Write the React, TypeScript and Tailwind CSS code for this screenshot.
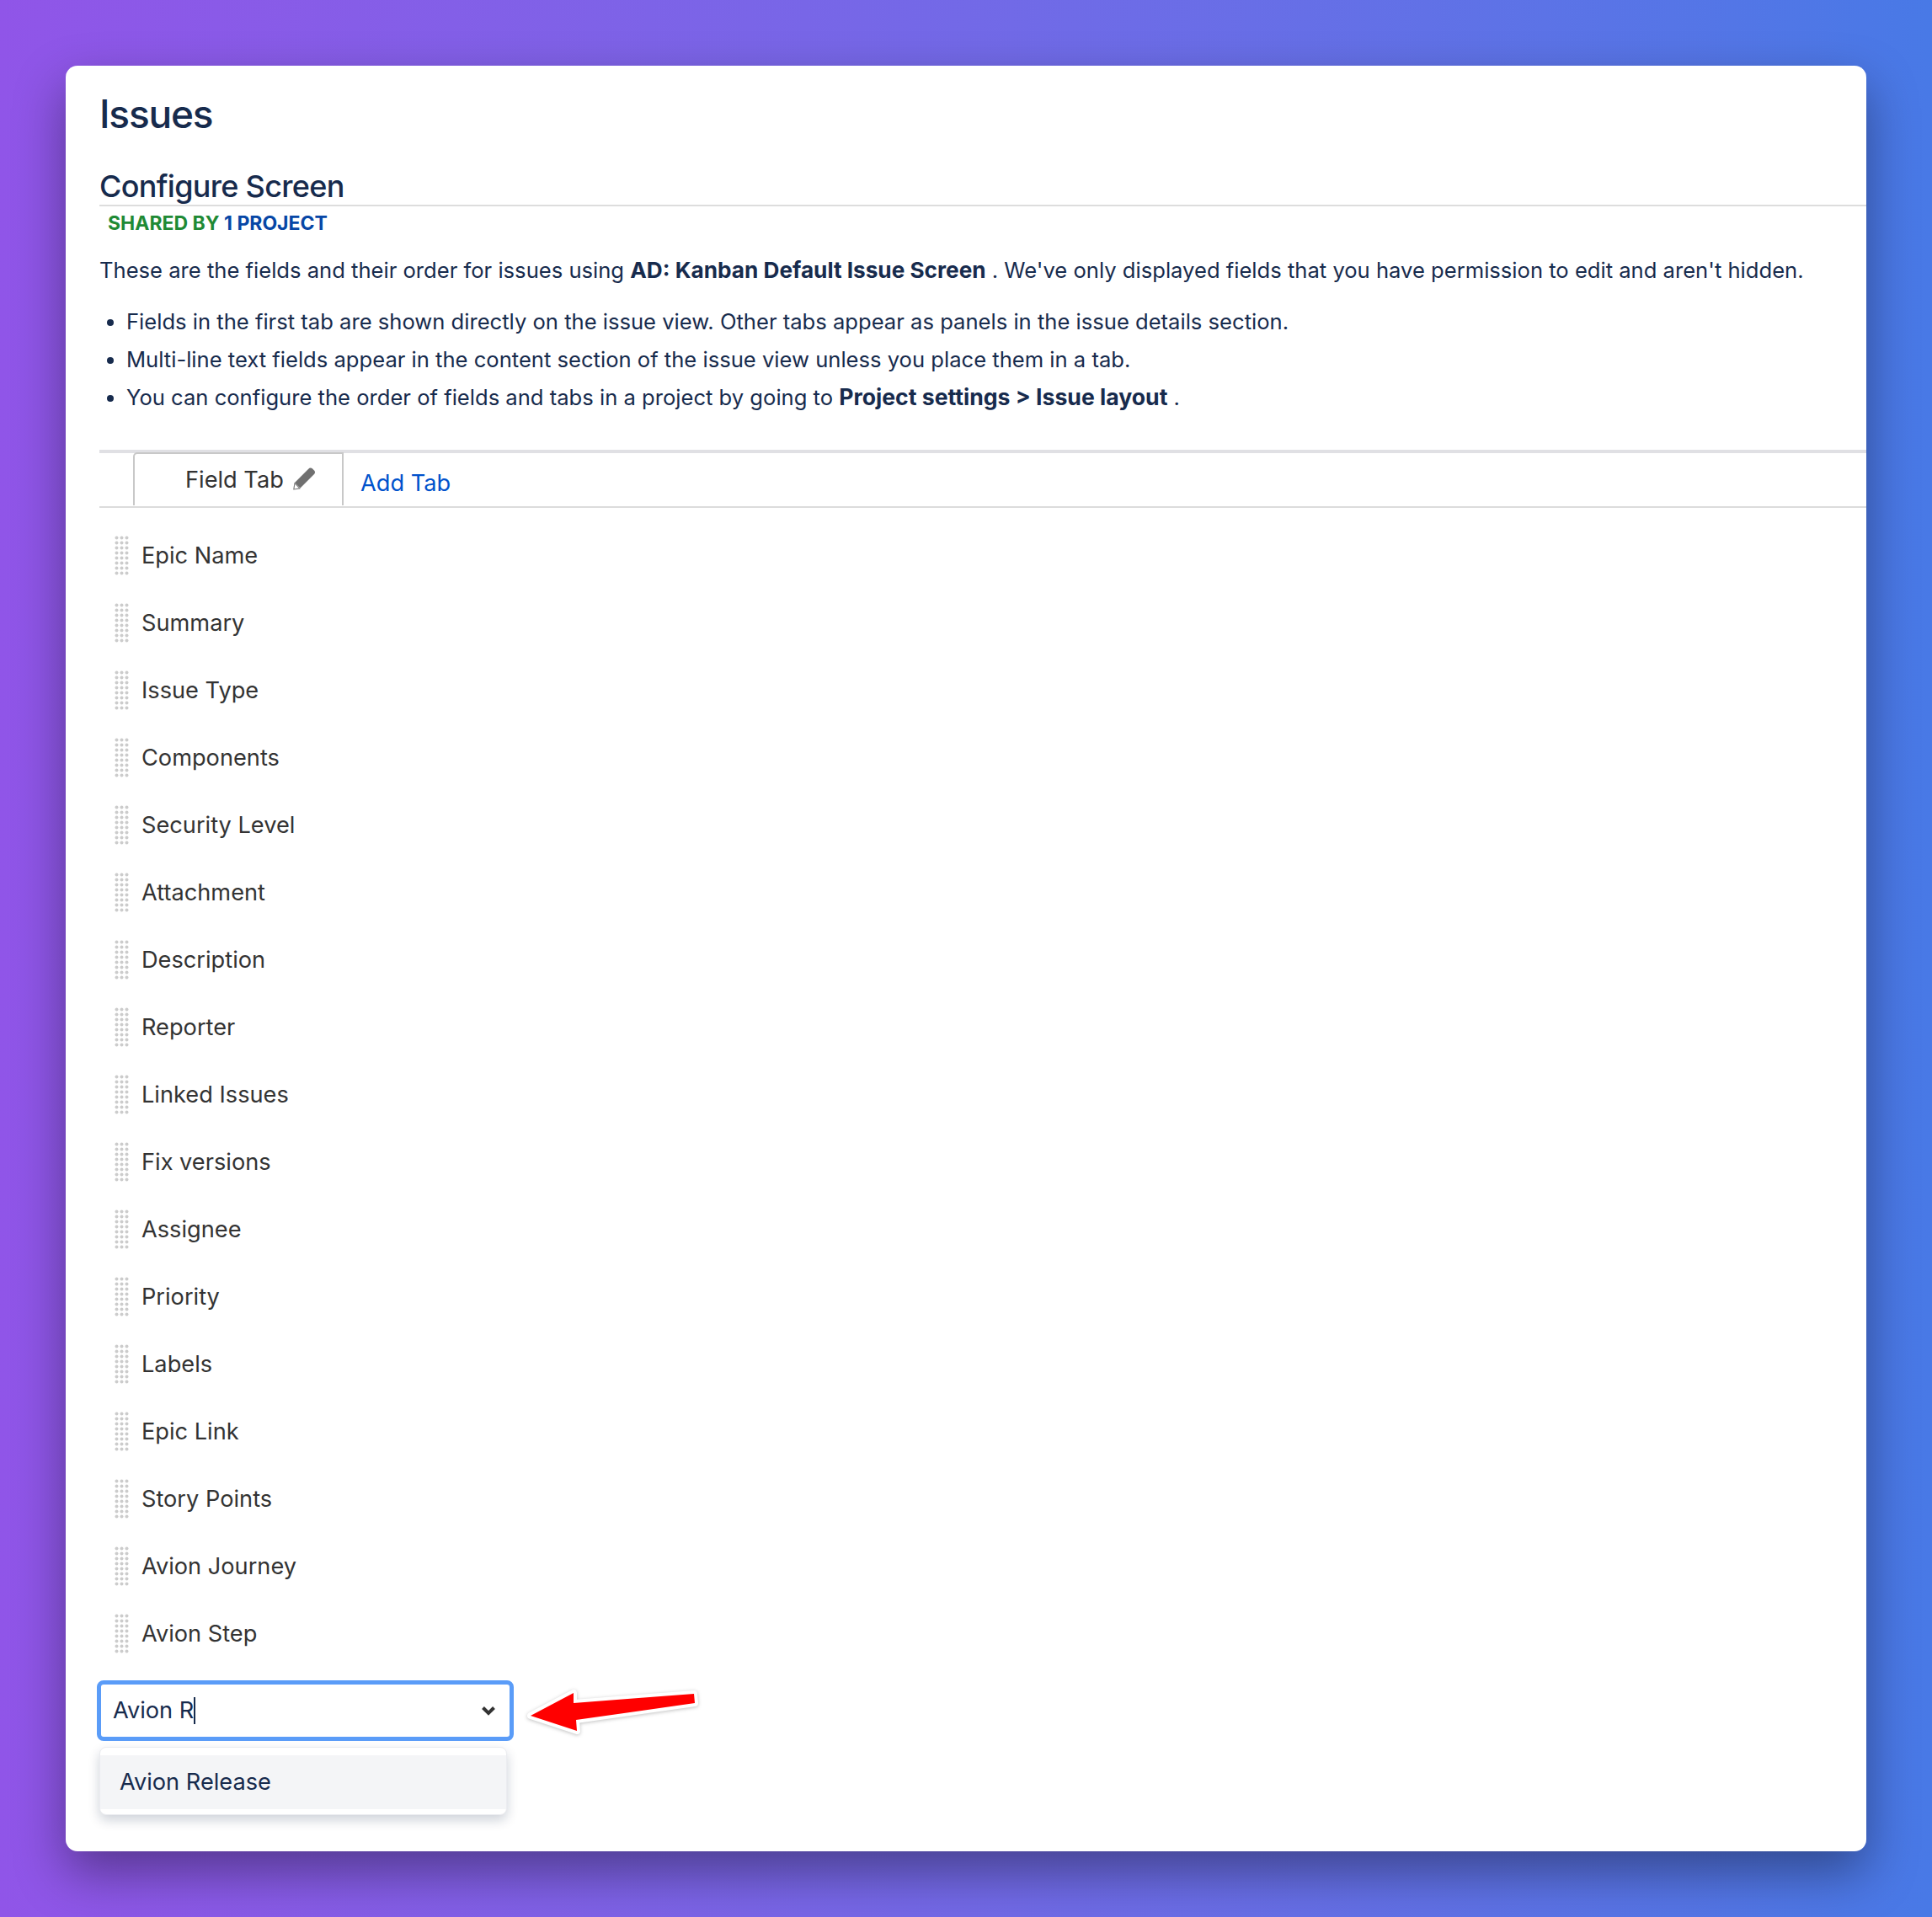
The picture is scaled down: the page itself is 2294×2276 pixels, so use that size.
import React from 'react';

const fields = [
  'Epic Name',
  'Summary',
  'Issue Type',
  'Components',
  'Security Level',
  'Attachment',
  'Description',
  'Reporter',
  'Linked Issues',
  'Fix versions',
  'Assignee',
  'Priority',
  'Labels',
  'Epic Link',
  'Story Points',
  'Avion Journey',
  'Avion Step',
];

const GripDots: React.FC = () => (
  <svg width="17" height="47" viewBox="0 0 17 47" className="shrink-0">
    {[0, 1, 2, 3, 4, 5, 6, 7].map((row) =>
      [0, 1, 2].map((col) => (
        <circle key={`${row}-${col}`} cx={2.5 + col * 6} cy={2.5 + row * 6} r="2" fill="#cccccc" />
      ))
    )}
  </svg>
);

const FieldRow: React.FC<{ name: string }> = ({ name }) => (
  <div className="flex h-[80px] items-center pl-[18px]">
    <GripDots />
    <span className="ml-[15px] mt-[2px] text-[27.2px] leading-[36px] text-[#333333]">{name}</span>
  </div>
);

const PencilIcon: React.FC = () => (
  <svg width="27" height="27" viewBox="0 0 27 27" className="ml-[11px] -mt-[4px] shrink-0">
    <path d="M8.5 24.5 L25 8 Q27 5.5 25 3.5 L23 1.5 Q20.5 -0.5 18 2 L2 18 Z" fill="#707070" />
    <path d="M2 18.5 L0.8 26 L8 24.8 Z" fill="#ffffff" stroke="#808080" strokeWidth="1.2" strokeLinejoin="round" />
  </svg>
);

const RedArrow: React.FC = () => (
  <svg width="216" height="70" viewBox="0 0 216 70" className="ml-[10px] mt-[3px] shrink-0">
    <polygon
      points="10,39 61,12 61,24 204,13 205,24 64,44 65,57"
      fill="#ff0000"
      stroke="#ffffff"
      strokeWidth="8"
      strokeLinejoin="round"
      paintOrder="stroke"
      style={{ filter: 'drop-shadow(0 1px 2px rgba(0,0,0,0.25))' }}
    />
  </svg>
);

export default function App() {
  return (
    <div className="w-[2294px] h-[2276px] bg-gradient-to-r from-[#9055e8] to-[#4879e6] pt-[78px] pl-[78px] font-['Inter',sans-serif] text-[#172b4d]">
      <div className="w-[2138px] h-[2120px] bg-white rounded-[14px] pl-[40px] pt-[29px] shadow-[0_25px_60px_rgba(0,0,0,0.38)]">
        <h1 className="text-[46px] leading-[56px] font-medium tracking-[-1.2px]">Issues</h1>
        <h2 className="mt-[36px] text-[36px] leading-[44px] font-medium tracking-[-0.7px] border-b-2 border-[#dddddd]">
          Configure Screen
        </h2>
        <div className="mt-[7px] ml-[10px] text-[23px] leading-[26px] font-bold text-[#1f8a35]">
          SHARED BY <span className="text-[#0747a6]">1 PROJECT</span>
        </div>
        <p className="mt-[25px] text-[25.6px] leading-[36px]">
          These are the fields and their order for issues using <strong className="text-[26.2px] font-bold">AD: Kanban Default Issue Screen</strong> . We've only displayed fields that you have permission to edit and aren't hidden.
        </p>
        <ul className="mt-[20px] ml-[32px] list-disc text-[25.6px] leading-[45px]">
          <li>Fields in the first tab are shown directly on the issue view. Other tabs appear as panels in the issue details section.</li>
          <li>Multi-line text fields appear in the content section of the issue view unless you place them in a tab.</li>
          <li>
            You can configure the order of fields and tabs in a project by going to <strong className="text-[26.6px] font-bold">Project settings &gt; Issue layout</strong> .
          </li>
        </ul>

        <div className="mt-[40px] h-[69px] border-t-4 border-b-2 border-[#e0e0e4] border-b-[#dcdcdc] flex items-start pl-[40px]">
          <div className="-mt-[1px] w-[250px] h-[63px] border-2 border-b-0 border-[#c8c8c8] rounded-tl-[5px] flex items-center pl-[60px] pt-[2px] text-[27.2px] text-[#333333]">
            <span>Field Tab</span>
            <PencilIcon />
          </div>
          <a className="ml-[20px] mt-[18px] text-[27.2px] leading-[36px] text-[#0052cc]">Add Tab</a>
        </div>

        <div className="mt-[16px]">
          {fields.map((name) => (
            <FieldRow key={name} name={name} />
          ))}
        </div>

        <div className="mt-[16px] -ml-[3px] flex items-start">
          <div className="w-[495px] h-[72px] rounded-[8px] border-[5px] border-[#5a9cf8] flex items-center pl-[14px] pr-[16px] justify-between">
            <span className="flex items-center text-[27.2px] text-[#172b4d]">
              Avion R<span className="w-[2px] h-[32px] bg-[#172b4d]" />
            </span>
            <svg width="18" height="12" viewBox="0 0 18 12">
              <path d="M2.5 2.5 L9 9 L15.5 2.5" fill="none" stroke="#333333" strokeWidth="4" />
            </svg>
          </div>
          <RedArrow />
        </div>

        <div className="mt-[6px] w-[484px] h-[81px] py-[9px] bg-white border border-[#ebecf0] rounded-[8px] shadow-[0_6px_14px_rgba(9,30,66,0.2)]">
          <div className="h-[64px] bg-[#f4f5f7] flex items-center pl-[23px] text-[27.2px] text-[#172b4d]">Avion Release</div>
        </div>
      </div>
    </div>
  );
}
